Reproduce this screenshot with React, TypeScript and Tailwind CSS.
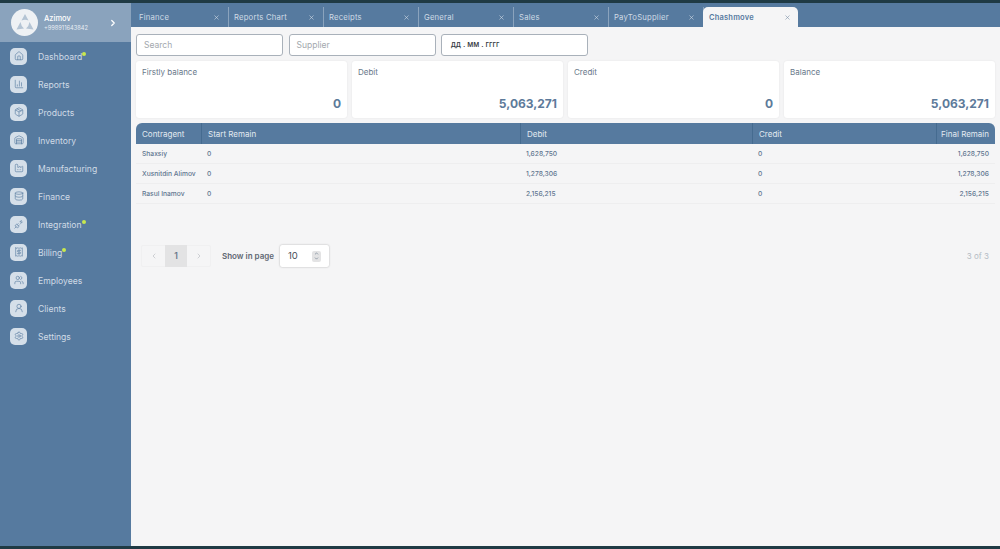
import {
  BarChart3,
  ChevronDown,
  ChevronLeft,
  ChevronRight,
  ChevronUp,
  Database,
  Factory,
  Home,
  Package,
  PlugZap,
  Receipt,
  Settings,
  UserRound,
  Users,
  Warehouse,
  X,
} from "lucide-react";

const menu = [
  { name: "Dashboard", icon: Home, dot: true },
  { name: "Reports", icon: BarChart3 },
  { name: "Products", icon: Package },
  { name: "Inventory", icon: Warehouse },
  { name: "Manufacturing", icon: Factory },
  { name: "Finance", icon: Database },
  { name: "Integration", icon: PlugZap, dot: true },
  { name: "Billing", icon: Receipt, dot: true },
  { name: "Employees", icon: Users },
  { name: "Clients", icon: UserRound },
  { name: "Settings", icon: Settings },
];

const tabs = ["Finance", "Reports Chart", "Receipts", "General", "Sales", "PayToSupplier"];

const cards = [
  { label: "Firstly balance", value: "0" },
  { label: "Debit", value: "5,063,271" },
  { label: "Credit", value: "0" },
  { label: "Balance", value: "5,063,271" },
];

const rows = [
  { name: "Shaxsiy", start: "0", debit: "1,628,750", credit: "0", final: "1,628,750" },
  { name: "Xusnitdin Alimov", start: "0", debit: "1,278,306", credit: "0", final: "1,278,306" },
  { name: "Rasul Inamov", start: "0", debit: "2,156,215", credit: "0", final: "2,156,215" },
];

const gridCols = "grid grid-cols-[65px_319px_232px_184px_59px]";

function Sidebar() {
  return (
    <aside className="flex w-[131px] shrink-0 flex-col bg-[#567a9f]">
      <div className="flex h-[39px] items-center bg-[#8aa3bd] pl-[11px] pr-[13px]">
        <div className="flex size-[27px] shrink-0 items-center justify-center rounded-full bg-[#eef1f4]">
          <svg viewBox="0 0 24 24" className="size-[24px]" fill="#b4c4d4">
            <path d="M12 3 L15.5 9.5 Q12 8 8.5 9.5 Z" />
            <path d="M7.5 11 Q8 15 11 17.5 L3.5 18.5 Z" />
            <path d="M16.5 11 Q16 15 13 17.5 L20.5 18.5 Z" />
          </svg>
        </div>
        <div className="ml-[6px] flex-1">
          <div className="text-[7.5px] leading-[10px] font-medium text-white">Azimov</div>
          <div className="text-[5.7px] leading-[8px] text-[#e8edf3]">+998911643842</div>
        </div>
        <ChevronRight className="size-[10px] text-white" strokeWidth={3} />
      </div>
      <nav className="flex flex-col">
        {menu.map((item) => {
          const Icon = item.icon;
          return (
            <div key={item.name} className="flex h-[28px] items-center pl-[10px]">
              <div className="flex size-[17px] items-center justify-center rounded-[5px] bg-[#d5dfe9]">
                <Icon className="size-[10px] text-[#567a9f]" strokeWidth={1.5} />
              </div>
              <span className="mt-[2px] ml-[11px] text-[8.6px] text-[#d0dbe6]">{item.name}</span>
              {item.dot && <span className="mb-[5px] size-[4px] rounded-full bg-[#c8e84e]" />}
            </div>
          );
        })}
      </nav>
    </aside>
  );
}

function TabBar() {
  return (
    <div className="flex h-[24px] shrink-0 items-end bg-[#567a9f] pl-[3px]">
      {tabs.map((tab) => (
        <div key={tab} className="flex h-[20px] w-[95px] items-center border-r border-[#8aa3bd] pt-[1px] pl-[5px] pr-[8px] last:border-r-0">
          <span className="flex-1 text-[7.7px] tracking-[0.2px] text-[#cfdae5]">{tab}</span>
          <X className="size-[7px] text-[#d5dfe9]" strokeWidth={2} />
        </div>
      ))}
      <div className="-ml-px flex h-[20px] w-[95px] items-center rounded-t-[5px] bg-[#f5f5f6] pt-[1px] pl-[6px] pr-[7px]">
        <span className="flex-1 text-[7.5px] font-semibold tracking-[0.2px] text-[#567a9f]">Chashmove</span>
        <X className="size-[7px] text-[#7b8fa6]" strokeWidth={2} />
      </div>
    </div>
  );
}

function Filters() {
  return (
    <div className="flex gap-[5.5px]">
      <div className="flex h-[22px] w-[147px] items-center rounded-[3px] border border-[#a9b1ba] bg-white pl-[7px] text-[8.5px] text-[#a3a8ae]">Search</div>
      <div className="flex h-[22px] w-[147px] items-center rounded-[3px] border border-[#a9b1ba] bg-white pl-[7px] text-[8.5px] text-[#a3a8ae]">Supplier</div>
      <div className="flex h-[22px] w-[147px] items-center rounded-[3px] border border-[#a9b1ba] bg-white pl-[9px] text-[7.7px] font-medium text-[#333a42]">дд . мм . гггг</div>
    </div>
  );
}

function Cards() {
  return (
    <div className="mt-[5px] grid grid-cols-4 gap-[5px]">
      {cards.map((card) => (
        <div key={card.label} className="flex h-[57px] flex-col justify-between rounded-[3px] bg-white pt-[5px] pr-[6px] pb-[5px] pl-[6px] shadow-[0_0_2px_rgba(0,0,0,0.08)]">
          <span className="text-[8px] text-[#69788a]">{card.label}</span>
          <span className="self-end text-[12px] font-bold text-[#5d7a9a]">{card.value}</span>
        </div>
      ))}
    </div>
  );
}

function DataTable() {
  return (
    <div className="mt-[5px]">
      <div className={`${gridCols} h-[21px] items-stretch rounded-t-[6px] bg-[#567a9f] text-[8px] text-[#e3eaf1]`}>
        <div className="flex items-center pl-[6px]">Contragent</div>
        <div className="flex items-center border-l border-[#456b90] pl-[6px]">Start Remain</div>
        <div className="flex items-center border-l border-[#456b90] pl-[6px]">Debit</div>
        <div className="flex items-center border-l border-[#456b90] pl-[6px]">Credit</div>
        <div className="flex items-center justify-end border-l border-[#456b90] pr-[6px]">Final Remain</div>
      </div>
      {rows.map((row) => (
        <div key={row.name} className={`${gridCols} h-[20px] items-center border-b border-[#eeeeef] pt-[1px] text-[6.7px] font-medium text-[#5f7590]`}>
          <div className="whitespace-nowrap pl-[6px]">{row.name}</div>
          <div className="pl-[6px]">{row.start}</div>
          <div className="pl-[6px]">{row.debit}</div>
          <div className="pl-[6px]">{row.credit}</div>
          <div className="pr-[6px] text-right">{row.final}</div>
        </div>
      ))}
    </div>
  );
}

function Pagination() {
  return (
    <div className="mt-[41px] flex items-center justify-between pl-[5px] pr-[1px]">
      <div className="flex items-center">
        <div className="flex h-[22px] items-center rounded-[2px] border border-[#f0f0f1]">
          <div className="flex w-[23px] justify-center">
            <ChevronLeft className="size-[8px] text-[#b9bdc2]" />
          </div>
          <div className="flex h-[22px] w-[22px] items-center justify-center bg-[#e3e3e4] text-[8.5px] font-semibold text-[#69788a]">1</div>
          <div className="flex w-[23px] justify-center">
            <ChevronRight className="size-[8px] text-[#b9bdc2]" />
          </div>
        </div>
        <span className="ml-[11px] text-[8px] font-semibold text-[#5f6873]">Show in page</span>
        <div className="ml-[6px] flex h-[22px] w-[49px] items-center justify-between rounded-[2px] bg-white pl-[8px] pr-[8px] shadow-[0_0_2px_rgba(0,0,0,0.3)]">
          <span className="text-[9.5px] text-[#47505a]">10</span>
          <div className="flex h-[11px] w-[9px] flex-col items-center justify-center rounded-[2px] bg-[#e3e3e4]">
            <ChevronUp className="size-[5px] text-[#69788a]" strokeWidth={3} />
            <ChevronDown className="size-[5px] text-[#69788a]" strokeWidth={3} />
          </div>
        </div>
      </div>
      <span className="pr-[5px] text-[8px] text-[#b4bbc4]">3 of 3</span>
    </div>
  );
}

export default function App() {
  return (
    <div className="flex h-[549px] w-[1000px] flex-col overflow-hidden bg-[#f5f5f6] font-['Inter',sans-serif]">
      <div className="h-[3px] shrink-0 bg-[#1f3a44]" />
      <div className="flex min-h-0 flex-1">
        <Sidebar />
        <main className="flex min-w-0 flex-1 flex-col">
          <TabBar />
          <div className="px-[5px] pt-[7px]">
            <Filters />
            <Cards />
            <DataTable />
            <Pagination />
          </div>
        </main>
      </div>
      <div className="h-[3px] shrink-0 bg-[#1f3a44]" />
    </div>
  );
}
